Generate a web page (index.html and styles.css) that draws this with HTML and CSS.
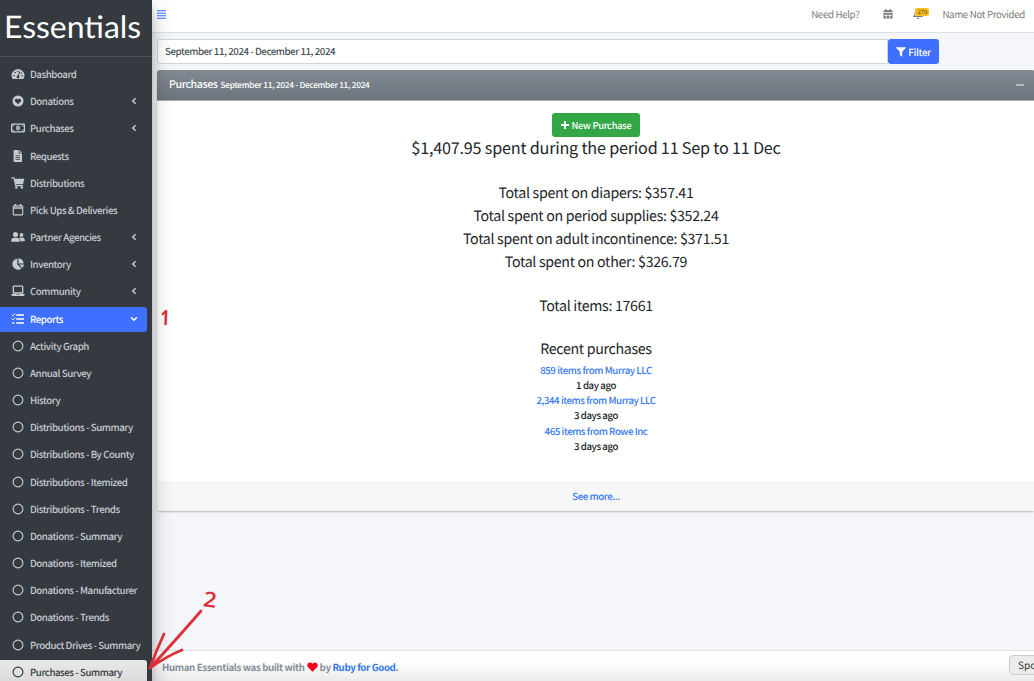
FILE: index.html
```html
<!DOCTYPE html>
<html lang="en">
<head>
<meta charset="utf-8">
<title>Purchases - Summary</title>
<link rel="stylesheet" href="styles.css">
</head>
<body>
<svg class="defs" width="0" height="0">
  <symbol id="left" viewBox="0 0 6 10"><path d="M4.600 2.200L1.800 5 4.600 7.800" fill="none" stroke="currentColor" stroke-width="1.500"/></symbol>
  <symbol id="ring" viewBox="0 0 14 14"><circle cx="7" cy="7" r="4.900" fill="none" stroke="currentColor" stroke-width="1.150"/></symbol>
</svg>
<div class="app">
  <aside class="sidebar">
    <div class="brand"><span>Essentials</span></div>
    <nav class="menu">
      <a class="item"><svg class="ico" viewBox="0 0 14 14"><path d="M1.7 12A6.3 6.3 0 1 1 12.3 12Z" fill="currentColor"/><path d="M7 10l1.7-5.4" stroke="#343a40" stroke-width="1"/><g fill="#343a40"><circle cx="7" cy="10" r="1.4"/><circle cx="3" cy="8.7" r=".8"/><circle cx="4.1" cy="5.6" r=".8"/><circle cx="6.8" cy="4.2" r=".7"/><circle cx="11" cy="8.7" r=".8"/><circle cx="10.2" cy="6" r=".7"/></g></svg><span>Dashboard</span></a>
      <a class="item"><svg class="ico" viewBox="0 0 14 14"><circle cx="7" cy="7" r="5.5" fill="currentColor"/><path d="M7 10.3L4.2 7.5C2.8 5.7 5.4 3.6 7 5.4 8.6 3.6 11.2 5.7 9.8 7.5Z" fill="#343a40"/></svg><span>Donations</span><svg class="chev"><use href="#left"/></svg></a>
      <a class="item"><svg class="ico" viewBox="0 0 14 14"><rect x=".6" y="3.2" width="12.8" height="7.6" rx=".5" fill="none" stroke="currentColor" stroke-width="1.2"/><path d="M1.2 5.2a1.8 1.8 0 0 0 1.8-1.8M12.8 5.2A1.8 1.8 0 0 1 11 3.400M1.2 8.800A1.800 1.800 0 0 1 3 10.600M12.800 8.800A1.800 1.800 0 0 0 11 10.600" fill="none" stroke="currentColor" stroke-width=".9"/><ellipse cx="7" cy="7" rx="2" ry="2.400" fill="currentColor"/><path d="M7 5.700v2.600" stroke="#343a40" stroke-width=".7"/></svg><span>Purchases</span><svg class="chev"><use href="#left"/></svg></a>
      <a class="item"><svg class="ico" viewBox="0 0 14 14"><path d="M3.300 1h4.300v3.400h3.400v7.900a.7.700 0 0 1-.7.700H3.300a.7.700 0 0 1-.7-.7V1.700A.7.700 0 0 1 3.300 1ZM8.300 1L11 3.700H8.300Z" fill="currentColor"/><path d="M4.500 6.800h4.600M4.500 8.600h4.600M4.500 10.400h4.600" stroke="#343a40" stroke-width=".8"/></svg><span>Requests</span></a>
      <a class="item"><svg class="ico" viewBox="0 0 14 14"><path d="M.8 1.900H3L4.700 9.700H11.600" fill="none" stroke="currentColor" stroke-width="1.200" stroke-linecap="round"/><path d="M3.300 2.700H13.300L12 8.300H4.500Z" fill="currentColor"/><circle cx="5.300" cy="11.500" r="1.200" fill="currentColor"/><circle cx="10.900" cy="11.500" r="1.200" fill="currentColor"/></svg><span>Distributions</span></a>
      <a class="item"><svg class="ico" viewBox="0 0 14 14"><path d="M4.400 1v2.200M9.600 1v2.200M2.200 5h9.600" stroke="currentColor" stroke-width="1.500"/><rect x="2.300" y="2.900" width="9.400" height="9" rx=".7" fill="none" stroke="currentColor" stroke-width="1.100"/></svg><span>Pick Ups &amp; Deliveries</span></a>
      <a class="item"><svg class="ico" viewBox="0 0 14 14"><g fill="currentColor"><circle cx="4.500" cy="4.500" r="2.500"/><circle cx="10.500" cy="4.900" r="1.900"/><path d="M.3 11.800V10.500Q.3 7.700 3.100 7.700H5.900Q8.700 7.700 8.700 10.500V11.800ZM9.400 11.200Q9.500 9 8 7.600H11.100Q13.700 7.600 13.700 10.100V11.200Z"/></g></svg><span>Partner Agencies</span><svg class="chev"><use href="#left"/></svg></a>
      <a class="item"><svg class="ico" viewBox="0 0 14 14"><path d="M6.300 1.400V7.400L10.500 11.600A5.700 5.700 0 1 1 6.300 1.400ZM7.400 1.200A5.500 5.500 0 0 1 12.700 6.600H7.400ZM8 7.600H13A5.500 5.500 0 0 1 11.400 11Z" fill="currentColor"/></svg><span>Inventory</span><svg class="chev"><use href="#left"/></svg></a>
      <a class="item"><svg class="ico" viewBox="0 0 14 14"><rect x="2.300" y="2.200" width="9.400" height="6.800" rx=".6" fill="none" stroke="currentColor" stroke-width="1.300"/><path d="M.4 10H5.200L5.700 10.600H8.300L8.800 10H13.600V10.700A1.400 1.400 0 0 1 12.200 12H1.800A1.400 1.400 0 0 1 .4 10.700Z" fill="currentColor"/></svg><span>Community</span><svg class="chev"><use href="#left"/></svg></a>
      <a class="item active"><svg class="ico" viewBox="0 0 14 14"><path d="M5.300 3h7.700M5.300 7h7.700M5.300 11h7.700" stroke="currentColor" stroke-width="1.400"/><path d="M.8 2.700L1.900 3.800 4.100 1.500M.8 6.700L1.900 7.800 4.100 5.500" fill="none" stroke="currentColor" stroke-width="1"/><circle cx="2.300" cy="11" r="1" fill="currentColor"/></svg><span>Reports</span><svg class="chev down"><use href="#left"/></svg></a>
      <a class="item"><svg class="ico"><use href="#ring"/></svg><span>Activity Graph</span></a>
      <a class="item"><svg class="ico"><use href="#ring"/></svg><span>Annual Survey</span></a>
      <a class="item"><svg class="ico"><use href="#ring"/></svg><span>History</span></a>
      <a class="item"><svg class="ico"><use href="#ring"/></svg><span>Distributions - Summary</span></a>
      <a class="item"><svg class="ico"><use href="#ring"/></svg><span>Distributions - By County</span></a>
      <a class="item"><svg class="ico"><use href="#ring"/></svg><span>Distributions - Itemized</span></a>
      <a class="item"><svg class="ico"><use href="#ring"/></svg><span>Distributions - Trends</span></a>
      <a class="item"><svg class="ico"><use href="#ring"/></svg><span>Donations - Summary</span></a>
      <a class="item"><svg class="ico"><use href="#ring"/></svg><span>Donations - Itemized</span></a>
      <a class="item"><svg class="ico"><use href="#ring"/></svg><span>Donations - Manufacturer</span></a>
      <a class="item"><svg class="ico"><use href="#ring"/></svg><span>Donations - Trends</span></a>
      <a class="item"><svg class="ico"><use href="#ring"/></svg><span>Product Drives - Summary</span></a>
      <a class="item current"><svg class="ico"><use href="#ring"/></svg><span>Purchases - Summary</span></a>
    </nav>
  </aside>
  <div class="main">
    <header class="topbar">
      <svg class="bars" viewBox="0 0 9 9"><path d="M0 .8h9M0 3.300h9M0 5.800h9M0 8.300h9" stroke="currentColor" stroke-width="1.100"/></svg>
      <span class="help">Need Help?</span>
      <svg class="cal" viewBox="0 0 10 12"><path d="M2.900.9v2M7.100.9v2" stroke="currentColor" stroke-width="1.300"/><path d="M.5 2.300h9v2h-9ZM.5 5h9v5.500h-9Z" fill="currentColor"/><path d="M.8 7.600h8.400M3.300 5.500v4.600M6.700 5.500v4.600" stroke="#fff" stroke-width=".7"/></svg>
      <span class="alerts"><svg class="bell" viewBox="0 0 10 12"><path d="M1 8.500Q2.200 7.500 2.200 5A2.800 2.800 0 0 1 7.800 5Q7.800 7.500 9 8.500Z" fill="none" stroke="currentColor" stroke-width="1.100"/><path d="M3.700 9.800h2.600a1.300 1.200 0 0 1-2.600 0" fill="currentColor"/></svg><span class="badge">279</span></span>
      <span class="user">Name Not Provided</span>
    </header>
    <main class="content">
      <div class="filter">
        <div class="dates">September 11, 2024 - December 11, 2024</div>
        <div class="btn blue"><svg class="funnel" viewBox="0 0 10 10"><path d="M.3.200H9.700Q10.100.6 9.700 1L6.200 4.800V9.800L3.800 8.200V4.800L.3 1Q-.1.600.3.200Z" fill="currentColor"/></svg><span>Filter</span></div>
      </div>
      <section class="card">
        <div class="card-head"><span class="title">Purchases</span><span class="range">September 11, 2024 - December 11, 2024</span><i class="minus"></i></div>
        <div class="card-body">
          <div class="btn green"><svg class="plus" viewBox="0 0 8 8"><path d="M4 0v8M0 4h8" stroke="currentColor" stroke-width="1.900"/></svg><span>New Purchase</span></div>
          <h2>$1,407.95 spent during the period 11 Sep to 11 Dec</h2>
          <div class="totals"><p>Total spent on diapers: $357.41</p><p>Total spent on period supplies: $352.24</p><p>Total spent on adult incontinence: $371.51</p><p>Total spent on other: $326.79</p></div>
          <p class="line">Total items: 17661</p>
          <p class="line">Recent purchases</p>
          <div class="recent">
            <a>859 items from Murray LLC</a><span>1 day ago</span>
            <a>2,344 items from Murray LLC</a><span>3 days ago</span>
            <a>465 items from Rowe Inc</a><span>3 days ago</span>
          </div>
        </div>
        <div class="card-foot">See more...</div>
      </section>
    </main>
    <footer class="footer"><span>Human Essentials was built with</span><svg class="heart" viewBox="0 0 12 11"><path d="M6 10.800L.8 5.600C-1.300 2.200 3-1.700 6 2 9-1.700 13.300 2.200 11.200 5.600Z" fill="#f5001d"/></svg><span>by <a>Ruby for Good</a>.</span></footer>
  </div>
</div>
<div class="tip">Spo</div>
<span class="mark one">1</span>
<span class="mark two">2</span>
<svg class="arrow" viewBox="0 0 56 62"><path d="M53 3Q26 34 2 60M16 26Q8 43 2 60Q19 48 34 42" fill="none" stroke="#dc3038" stroke-width="2.800" stroke-linecap="round" stroke-linejoin="round"/></svg>
</body>
</html>
```

FILE: styles.css
```css
* { box-sizing: border-box; }
body { margin: 0; width: 1034px; height: 681px; overflow: hidden; position: relative; font-family: "Noto Sans CJK SC", "Noto Sans", sans-serif; font-size: 9.700px; letter-spacing: -.44px; color: #212529; text-rendering: geometricPrecision; }
p, h2 { margin: 0; font-weight: 400; }
.defs { position: absolute; }
.app { display: flex; width: 1034px; height: 681px; }
.sidebar { position: relative; z-index: 2; flex: none; width: 152px; height: 681px; background: #343a40; color: #c8cbd4; box-shadow: 0 10px 21px rgba(0,0,0,.25), 0 8px 8px rgba(0,0,0,.15); }
.brand { height: 57px; border-bottom: 1px solid #4b545c; padding: 6px 0 0 4px; color: #fff; font: 400 31px/40px Lato, sans-serif; letter-spacing: 0; white-space: nowrap; }
.brand span { display: inline-block; transform: scaleX(1.030); transform-origin: left center; }
.menu { padding-top: 5px; }
.item { display: flex; align-items: center; width: 147px; height: 25px; margin-bottom: 2.180px; padding: 0 0 1px 11px; white-space: nowrap; font-weight: 500; }
.item span { flex: 1; }
.ico { width: 14px; height: 14px; margin-right: 5px; flex: none; }
.chev { width: 6px; height: 10px; margin-right: 10px; flex: none; }
.down { transform: rotate(-90deg); }
.active { background: #3f6fff; color: #fff; border-radius: 0 3px 3px 0; }
.current { background: linear-gradient(#e9e9e9, #d8d8d8); color: #343a40; border-radius: 0 3px 0 0; }
.main { flex: 1; min-width: 0; display: flex; flex-direction: column; background: #f4f6f9; }
.topbar { display: flex; align-items: center; height: 33px; padding: 0 9px 4px 5px; border-bottom: 1px solid #dee2e6; background: #fff; color: #7b7b7b; white-space: nowrap; letter-spacing: -.33px; }
.bars { width: 9px; height: 9px; color: #3f6fff; margin-right: auto; }
.cal { width: 10px; height: 12px; margin-left: 24px; }
.alerts { position: relative; display: flex; margin: 0 19px 0 20px; width: 10px; }
.bell { width: 10px; height: 12px; }
.badge { position: absolute; left: 2px; top: 0; width: 14px; height: 8px; border-radius: 2px; background: #fac022; color: #4c3c10; font-size: 6px; letter-spacing: 0; line-height: 8px; text-align: center; }
.content { flex: 1; padding: 6px 0 0 5px; }
.filter { display: flex; height: 25px; margin-bottom: 6px; }
.dates { width: 731px; border: 1px solid #ced4da; border-radius: 3px 0 0 3px; background: #fff; padding-left: 7px; line-height: 23px; color: #495057; font-weight: 500; }
.btn { display: flex; align-items: center; justify-content: center; color: #fff; border-radius: 3px; font-weight: 500; letter-spacing: -.3px; }
.blue { width: 51px; background: #3f6fff; gap: 2px; }
.funnel { width: 10px; height: 10px; }
.card { width: 878px; height: 441px; display: flex; flex-direction: column; border-radius: 3px; background: #fff; box-shadow: 0 1px 2px rgba(0,0,0,.25); overflow: hidden; }
.card-head { display: flex; align-items: baseline; height: 31px; padding: 0 11px 0 12px; line-height: 29px; color: #fff; font-weight: 500; background: linear-gradient(#828992, #6c757d); border-bottom: 1px solid #a9aeb5; }
.title { font-size: 10.600px; margin-right: 3px; letter-spacing: -.38px; }
.range { font-size: 8.300px; letter-spacing: -.29px; }
.minus { margin-left: auto; align-self: center; width: 8px; height: 2px; background: #b5bac0; }
.card-body { height: 380px; padding-top: 12px; display: flex; flex-direction: column; align-items: center; white-space: nowrap; }
.green { width: 88px; height: 24px; flex: none; background: #33a746; gap: 3px; font-size: 9.400px; padding-bottom: 1px; }
.plus { width: 8px; height: 8px; }
h2 { font-size: 16.200px; line-height: 20px; margin-bottom: 25px; letter-spacing: -.21px; }
.totals, .line { font-size: 14.200px; line-height: 23px; text-align: center; letter-spacing: -.31px; margin-bottom: 20.500px; }
.line + .line { margin-bottom: 0; }
.recent { display: flex; flex-direction: column; align-items: center; padding-top: 2px; font-weight: 500; line-height: 15.150px; }
a { color: inherit; }
.recent a, .card-foot, .footer a { color: #3478f6; }
.card-foot { height: 30px; background: #f7f7f7; line-height: 30px; text-align: center; font-weight: 500; }
.footer { display: flex; align-items: center; height: 31px; border-top: 1px solid #dee2e6; background: linear-gradient(#fff 35%, #ebebeb); color: #869099; font-weight: 700; padding: 2px 0 0 10px; white-space: nowrap; letter-spacing: -.38px; }
.heart { width: 11px; height: 10px; margin: 0 2px; }
.tip { position: absolute; z-index: 3; left: 1009px; top: 655px; width: 40px; height: 20px; border: 1px solid #ccc; border-radius: 4px; background: #ececec; padding-left: 8px; line-height: 18px; color: #333; font-size: 10px; letter-spacing: 0; }
.mark { position: absolute; z-index: 4; color: #dc3038; font-weight: 700; font-family: "Open Sans", sans-serif; line-height: 20px; letter-spacing: 0; }
.one { left: 159px; top: 308px; font-size: 21px; transform: scaleX(.75) rotate(3deg); }
.two { left: 204px; top: 590px; font-size: 21px; font-weight: 600; transform: rotate(8deg) scaleX(1.100); }
.arrow { position: absolute; z-index: 4; left: 148px; top: 608px; width: 56px; height: 62px; }
```
